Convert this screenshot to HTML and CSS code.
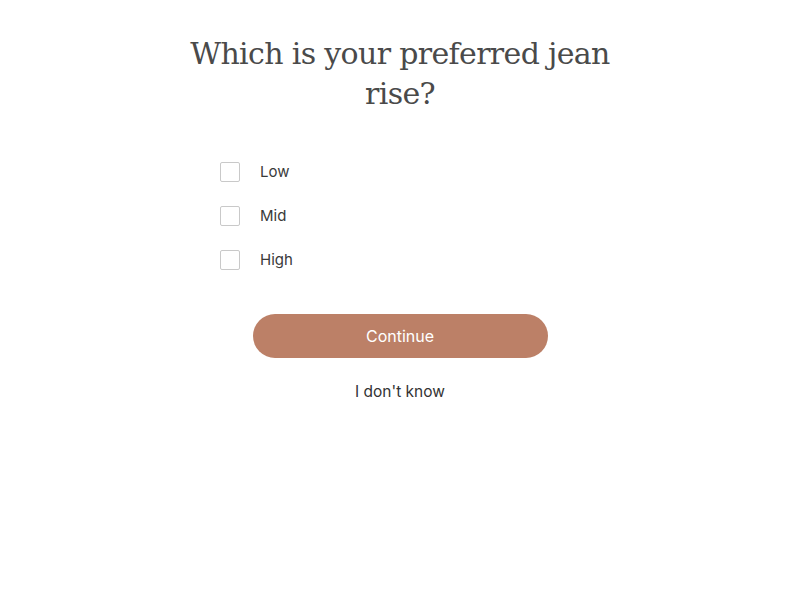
FILE: index.html
```html
<!DOCTYPE html>
<html lang="en">
<head>
<meta charset="utf-8">
<title>Jean rise</title>
<link rel="stylesheet" href="styles.css">
</head>
<body>
<main class="quiz">
  <h1 class="quiz-title">Which is your preferred jean rise?</h1>
  <ul class="options">
    <li class="option"><span class="box"></span><span class="label">Low</span></li>
    <li class="option"><span class="box"></span><span class="label">Mid</span></li>
    <li class="option"><span class="box"></span><span class="label">High</span></li>
  </ul>
  <button class="continue">Continue</button>
  <a class="skip">I don't know</a>
</main>
</body>
</html>
```
FILE: styles.css
```css
html, body {
  margin: 0;
  background: #fff;
}
.quiz {
  display: flex;
  flex-direction: column;
  align-items: center;
  padding-top: 34px;
  font-family: "Inter", "Noto Sans", sans-serif;
  color: #333;
}
.quiz-title {
  margin: 0;
  width: 430px;
  text-align: center;
  font-family: "DejaVu Serif", "Liberation Serif", serif;
  font-weight: 400;
  font-size: 30px;
  line-height: 40px;
  color: #4a4a4a;
  letter-spacing: -0.65px;
}
.options {
  list-style: none;
  margin: 48px 0 0;
  padding: 0;
  width: 360px;
  display: flex;
  flex-direction: column;
  gap: 24px;
}
.option {
  display: flex;
  align-items: center;
  gap: 20px;
  height: 20px;
}
.box {
  width: 18px;
  height: 18px;
  border: 1px solid #c9c9c9;
  border-radius: 2px;
}
.label {
  font-size: 15px;
  line-height: 18px;
  color: #3a3a3a;
}
.continue {
  margin-top: 44px;
  width: 295px;
  height: 44px;
  border: 0;
  border-radius: 22px;
  background: #bc8067;
  color: #fff;
  font-family: inherit;
  font-size: 16px;
  cursor: pointer;
}
.skip {
  margin-top: 24px;
  font-size: 15.5px;
  line-height: 20px;
  color: #333;
}
```
